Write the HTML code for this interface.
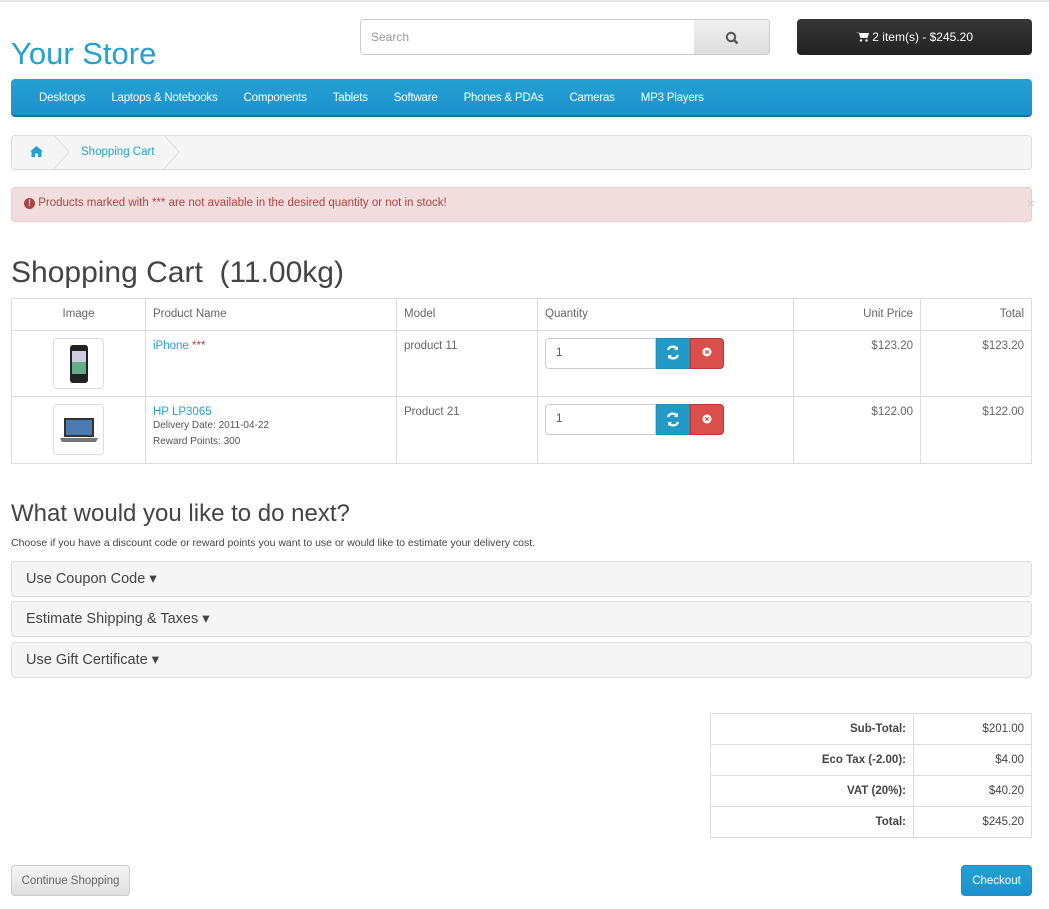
<!DOCTYPE html>
<html><head><meta charset="utf-8"><style>
*{box-sizing:border-box}
body{margin:0;width:1049px;height:909px;font-family:"Liberation Sans",sans-serif;font-size:12px;color:#666;background:#fff;border-top:2px solid #e6e6e6;position:relative;overflow:hidden}
.a{position:absolute}
a{color:#23a1d1;text-decoration:none}
.logo{left:11px;top:34px;font-size:31px;color:#23a1d1}
.search{left:360px;top:17px;width:335px;height:36px;border:1px solid #ccc;border-radius:4px 0 0 4px;padding:10px;color:#999;font-size:12px}
.sbtn{left:694px;top:17px;width:76px;height:36px;border:1px solid #ccc;border-left:0;border-radius:0 4px 4px 0;background:linear-gradient(#f0f0f0,#dedede)}
.cart{left:797px;top:17px;width:235px;height:36px;border-radius:4px;background:linear-gradient(#363636,#222);color:#fff;text-align:center;line-height:36px;font-size:12px}
.nav{left:11px;top:77px;width:1021px;height:38px;border-radius:4px;background:linear-gradient(#23a1d1,#1e91cf);border-bottom:2px solid #1f6f95}
.nav span{display:inline-block;color:#fff;font-size:11.5px;line-height:38px;margin-left:26px;letter-spacing:-0.2px}
.nav span:first-child{margin-left:28px}
.bc{left:11px;top:133px;width:1021px;height:35px;background:#f5f5f5;border:1px solid #ddd;border-radius:4px}
.alert{left:11px;top:185px;width:1021px;height:35px;background:#f2dede;border:1px solid #ebccd1;border-radius:4px;color:#a94442;padding:9px 12px;font-size:11.5px}
h1{position:absolute;left:11px;top:254px;margin:0;font-weight:normal;font-size:30px;color:#444}
table{border-collapse:collapse;position:absolute}
td{border:1px solid #ddd;padding:9px 7px 6px;vertical-align:top;font-size:11.5px}
.cart-t{left:11px;top:296px;width:1021px}
.img{width:51px;height:51px;border:1px solid #ddd;border-radius:4px;margin:-2px auto 0;display:flex;align-items:center;justify-content:center}
.qty{display:flex;height:31px;margin-top:-2px}
.qty .in{width:111px;border:1px solid #ccc;border-radius:4px 0 0 4px;padding:8px 10px;color:#555}
.qty .b1{width:34px;background:#229ac8;border:1px solid #1f90bb}
.qty .b2{width:34px;background:#da4f49;border:1px solid #bd362f;border-radius:0 4px 4px 0}
h2{position:absolute;left:11px;top:498px;margin:0;font-weight:normal;font-size:24px;color:#444}
.panel{left:11px;width:1021px;height:36px;background:#f5f5f5;border:1px solid #ddd;border-radius:4px;font-size:14.5px;color:#444;padding:9px 14px}
.tot{left:710px;top:711px;width:322px}
.tot td{height:31px;text-align:right;color:#444;padding:9px 7px 5px}
.btn{height:31px;border-radius:4px;text-align:center;line-height:30px;font-size:11.5px}
</style></head><body>
<div class="a logo">Your Store</div>
<div class="a search">Search</div>
<div class="a sbtn"><svg width="76" height="34" viewBox="0 0 76 34"><circle cx="37" cy="17" r="4.2" fill="none" stroke="#555" stroke-width="2"/><path d="M40 20l3.5 3.5" stroke="#555" stroke-width="2.4"/></svg></div>
<div class="a cart"><svg width="13" height="11" viewBox="0 0 13 11" style="vertical-align:-1px"><path d="M0 1h2.5l2 6h7l1.5-5H4" fill="#fff"/><circle cx="5" cy="9.5" r="1.2" fill="#fff"/><circle cx="10.5" cy="9.5" r="1.2" fill="#fff"/></svg> 2 item(s) - $245.20</div>
<div class="a nav"><span>Desktops</span><span>Laptops &amp; Notebooks</span><span>Components</span><span>Tablets</span><span>Software</span><span>Phones &amp; PDAs</span><span>Cameras</span><span>MP3 Players</span></div>
<div class="a bc"><svg class="a" style="left:18px;top:10px" width="13" height="11" viewBox="0 0 13 11"><path d="M6.5 0L0 5.5h1.5V11h3.5V7.5h3V11h3.5V5.5H13z" fill="#23a1d1"/></svg>
<svg class="a" style="left:40px;top:-1px" width="140" height="35"><path d="M2 0l15 17L2 34M112 0l15 17-15 17" fill="none" stroke="#ddd"/></svg>
<a class="a" style="left:69px;top:10px;font-size:11.5px">Shopping Cart</a></div>
<div class="a alert"><span style="display:inline-block;width:11px;height:11px;border-radius:50%;background:#a94442;color:#f2dede;font-size:9px;text-align:center;line-height:11px;font-weight:bold">!</span> Products marked with *** are not available in the desired quantity or not in stock!<span class="a" style="right:-4px;top:7px;color:#ccc;font-size:14px">×</span></div>
<h1>Shopping Cart &nbsp;(11.00kg)</h1>
<table class="cart-t">
<tr style="height:32px"><td style="width:134px;text-align:center">Image</td><td style="width:251px">Product Name</td><td style="width:141px">Model</td><td style="width:256px">Quantity</td><td style="width:127px;text-align:right">Unit Price</td><td style="text-align:right">Total</td></tr>
<tr style="height:66px"><td><div class="img"><svg width="20" height="38"><rect x="1" y="0" width="18" height="38" rx="3" fill="#222"/><rect x="3" y="6" width="14" height="23" fill="#6a8"/><rect x="3" y="6" width="14" height="11" fill="#ccd"/></svg></div></td><td><a>iPhone</a> <span style="color:#a94442">***</span></td><td>product 11</td><td><div class="qty"><div class="in">1</div><div class="b1"></div><div class="b2"></div></div></td><td style="text-align:right">$123.20</td><td style="text-align:right">$123.20</td></tr>
<tr style="height:67px"><td><div class="img"><svg width="40" height="28"><rect x="5" y="2" width="30" height="19" fill="#333"/><rect x="7" y="4" width="26" height="15" fill="#4a7ab0"/><path d="M1 22h38l-2 4H3z" fill="#777"/></svg></div></td><td><a>HP LP3065</a><br><span style="font-size:10px;line-height:16px;color:#555">Delivery Date: 2011-04-22<br>Reward Points: 300</span></td><td>Product 21</td><td><div class="qty"><div class="in">1</div><div class="b1"></div><div class="b2"></div></div></td><td style="text-align:right">$122.00</td><td style="text-align:right">$122.00</td></tr>
</table>
<svg class="a" style="left:656px;top:335px" width="68" height="31"><path d="M12 13a5 5 0 0 1 9-1M22 18a5 5 0 0 1-9 1" stroke="#fff" stroke-width="2.2" fill="none"/><path d="M22 9v4h-4M12 22v-4h4" fill="#fff"/><circle cx="51" cy="15" r="4.5" fill="#fff"/><path d="M49.3 13.3l3.4 3.4M52.7 13.3l-3.4 3.4" stroke="#da4f49" stroke-width="1.3"/></svg>
<svg class="a" style="left:656px;top:402px" width="68" height="31"><path d="M12 13a5 5 0 0 1 9-1M22 18a5 5 0 0 1-9 1" stroke="#fff" stroke-width="2.2" fill="none"/><path d="M22 9v4h-4M12 22v-4h4" fill="#fff"/><circle cx="51" cy="15" r="4.5" fill="#fff"/><path d="M49.3 13.3l3.4 3.4M52.7 13.3l-3.4 3.4" stroke="#da4f49" stroke-width="1.3"/></svg>
<h2>What would you like to do next?</h2>
<div class="a" style="left:11px;top:535px;font-size:10.5px;color:#444">Choose if you have a discount code or reward points you want to use or would like to estimate your delivery cost.</div>
<div class="a panel" style="top:559px">Use Coupon Code ▾</div>
<div class="a panel" style="top:599px">Estimate Shipping &amp; Taxes ▾</div>
<div class="a panel" style="top:640px">Use Gift Certificate ▾</div>
<table class="tot">
<tr><td style="width:203px"><b>Sub-Total:</b></td><td>$201.00</td></tr>
<tr><td><b>Eco Tax (-2.00):</b></td><td>$4.00</td></tr>
<tr><td><b>VAT (20%):</b></td><td>$40.20</td></tr>
<tr><td><b>Total:</b></td><td>$245.20</td></tr>
</table>
<div class="a btn" style="left:11px;top:863px;width:119px;background:linear-gradient(#f5f5f5,#e0e0e0);border:1px solid #ccc;color:#666">Continue Shopping</div>
<div class="a btn" style="left:961px;top:863px;width:71px;background:linear-gradient(#23a1d1,#1e91cf);border:1px solid #1f90bb;color:#fff">Checkout</div>
</body></html>
